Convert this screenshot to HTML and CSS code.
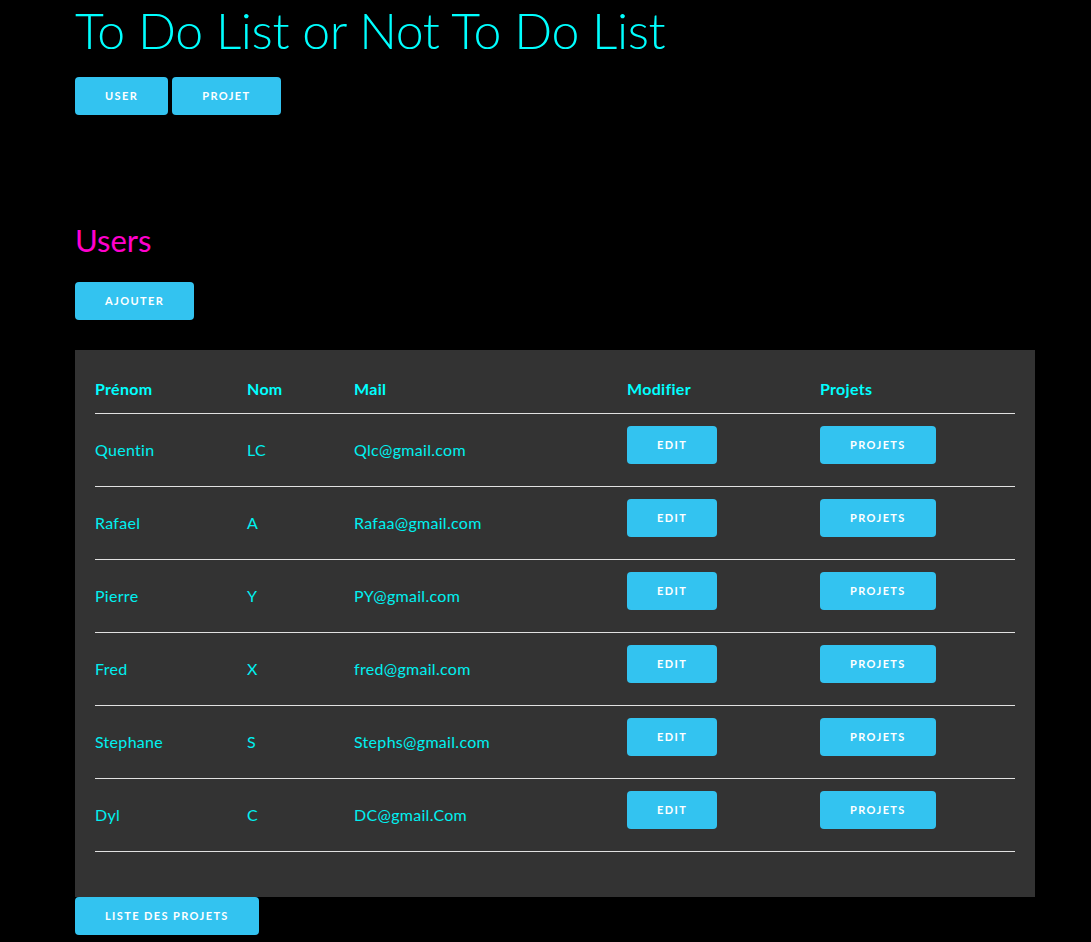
FILE: index.html
```html
<!DOCTYPE html>
<html lang="fr">
<head>
<meta charset="utf-8">
<title>To Do List or Not To Do List</title>
<link rel="stylesheet" href="styles.css">
</head>
<body>
<div class="container">
  <h1 class="title">To Do List or Not To Do List</h1>
  <nav class="nav">
    <a class="button" href="#">User</a>
    <a class="button" href="#">Projet</a>
  </nav>

  <h4 class="section-title">Users</h4>
  <a class="button" href="#">Ajouter</a>

  <div class="panel">
    <table class="users">
      <colgroup>
        <col class="c1"><col class="c2"><col class="c3"><col class="c4"><col class="c5">
      </colgroup>
      <thead>
        <tr><th>Prénom</th><th>Nom</th><th>Mail</th><th>Modifier</th><th>Projets</th></tr>
      </thead>
      <tbody>
        <tr><td>Quentin</td><td>LC</td><td>Qlc@gmail.com</td><td><a class="button btn-edit" href="#">Edit</a></td><td><a class="button btn-proj" href="#">Projets</a></td></tr>
        <tr><td>Rafael</td><td>A</td><td>Rafaa@gmail.com</td><td><a class="button btn-edit" href="#">Edit</a></td><td><a class="button btn-proj" href="#">Projets</a></td></tr>
        <tr><td>Pierre</td><td>Y</td><td>PY@gmail.com</td><td><a class="button btn-edit" href="#">Edit</a></td><td><a class="button btn-proj" href="#">Projets</a></td></tr>
        <tr><td>Fred</td><td>X</td><td>fred@gmail.com</td><td><a class="button btn-edit" href="#">Edit</a></td><td><a class="button btn-proj" href="#">Projets</a></td></tr>
        <tr><td>Stephane</td><td>S</td><td>Stephs@gmail.com</td><td><a class="button btn-edit" href="#">Edit</a></td><td><a class="button btn-proj" href="#">Projets</a></td></tr>
        <tr><td>Dyl</td><td>C</td><td>DC@gmail.Com</td><td><a class="button btn-edit" href="#">Edit</a></td><td><a class="button btn-proj" href="#">Projets</a></td></tr>
      </tbody>
    </table>
  </div>
  <a class="button btn-list" href="#">Liste des projets</a>
</div>
</body>
</html>
```
FILE: styles.css
```css
html, body {
  margin: 0;
  padding: 0;
  background: #000;
}
body {
  font-family: Lato, "Open Sans", "Liberation Sans", sans-serif;
  font-size: 15px;
  line-height: 1.6;
  color: #00ffff;
}
.container {
  width: 960px;
  margin-left: 75px;
}
.title {
  margin: 0 0 17px;
  font-size: 50px;
  line-height: 1.2;
  font-weight: 300;
  letter-spacing: -0.4px;
  color: #00ffff;
}
.nav {
  display: flex;
  gap: 4px;
}
.button {
  display: inline-flex;
  align-items: center;
  justify-content: center;
  box-sizing: border-box;
  height: 38px;
  padding: 0 30px;
  margin-bottom: 10px;
  background: #33c3f0;
  color: #fff;
  border-radius: 4px;
  font-size: 11px;
  font-weight: 700;
  letter-spacing: 1.4px;
  text-transform: uppercase;
  text-decoration: none;
  white-space: nowrap;
}
.section-title {
  margin: 95px 0 20px;
  font-size: 31px;
  line-height: 1.35;
  font-weight: 400;
  letter-spacing: 0;
  color: #ff00cc;
}
.panel {
  margin-top: 20px;
  background: #333;
  padding: 15px 20px 20px;
}
.users {
  width: 100%;
  border-collapse: collapse;
  table-layout: fixed;
  margin-bottom: 25px;
}
.c1 { width: 137px; }
.c2 { width: 107px; }
.c3 { width: 273px; }
.c4 { width: 193px; }
.c5 { width: 210px; }
.users th,
.users td {
  padding: 12px 15px;
  text-align: left;
  border-bottom: 1px solid #e1e1e1;
  vertical-align: middle;
  font-size: 16px;
  line-height: 24px;
}
.users th:first-child,
.users td:first-child { padding-left: 0; }
.users th:last-child,
.users td:last-child { padding-right: 0; }
.users th {
  font-weight: 700;
  letter-spacing: 0.3px;
  color: #00ffff;
}
.users td {
  color: #00f0f0;
  letter-spacing: 0.3px;
}
.users .button { vertical-align: middle; }
.btn-list { margin-bottom: 0; }
```
